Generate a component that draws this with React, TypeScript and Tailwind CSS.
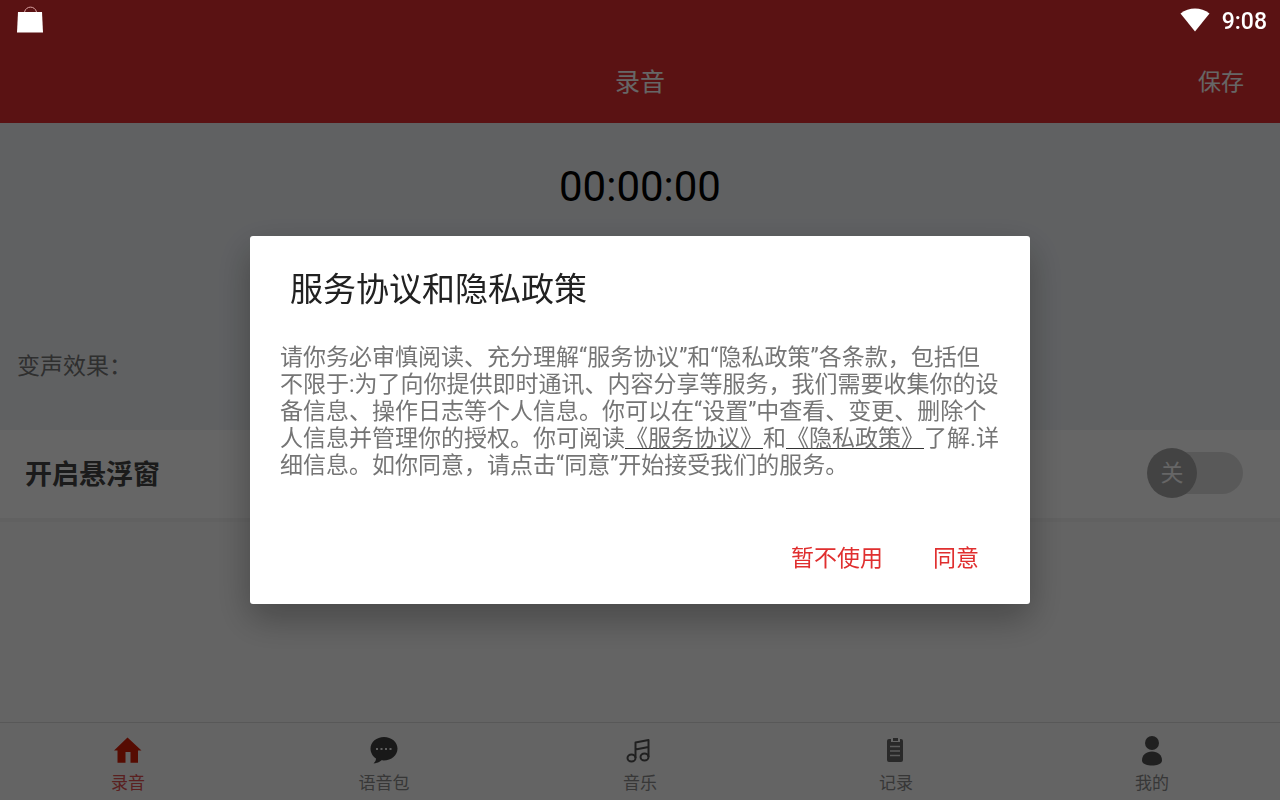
import type { ReactNode } from "react";

function BagIcon() {
  return (
    <svg width="28" height="28" viewBox="0 0 28 28" aria-hidden="true">
      <path d="M8.500 6C10 -.5 19 -.5 20.500 6" fill="none" stroke="#d9a3a3" strokeWidth="1" />
      <path d="M2 6h24L27 26.500H1z" fill="#fff" />
    </svg>
  );
}

function WifiIcon() {
  return (
    <svg width="30" height="24" viewBox="0 0 30 24" aria-hidden="true">
      <path d="M15 23.5L0.5 5.5C9 -1.200 21 -1.200 29.500 5.500z" fill="#fff" />
    </svg>
  );
}

function HomeIcon() {
  return (
    <svg width="28" height="28" viewBox="0 0 28 28" aria-hidden="true">
      <path d="M13.500 1.500L27.500 14.500H24V26.800H16.500V16h-5v10.800H3.500V14.500H0z" fill="#d81e06" />
    </svg>
  );
}

function ChatIcon() {
  return (
    <svg width="28" height="28" viewBox="0 0 28 28" aria-hidden="true">
      <path
        d="M14 1C6.500 1 0.500 6 0.500 12.500c0 4.500 2.500 8 5.500 10 0 2-1 3.500-2.500 5 3.500-.2 6-1.500 8-3.200 9 1 16-4.500 16-11.800C27.500 6 21.500 1 14 1z"
        fill="#404040"
      />
      <path d="M6 12h2v2H6zM10.500 12h2v2h-2zM15 12h2v2h-2zM19.500 12h2v2h-2z" fill="#eee" />
    </svg>
  );
}

function MusicIcon() {
  return (
    <svg width="28" height="28" viewBox="0 0 28 28" fill="none" stroke="#515151" strokeWidth="2" aria-hidden="true">
      <ellipse cx="5.500" cy="22" rx="4" ry="3.500" />
      <ellipse cx="18.500" cy="21" rx="4" ry="3.500" />
      <path d="M9.500 22V6.500L22.500 4v17M9.500 13.500L22.500 11" strokeLinejoin="round" />
    </svg>
  );
}

function ClipboardIcon() {
  return (
    <svg width="28" height="28" viewBox="0 0 28 28" aria-hidden="true">
      <path
        d="M7 3h2v3h9V3h1a2 2 0 0 1 2 2v19a2 2 0 0 1-2 2H7a2 2 0 0 1-2-2V5a2 2 0 0 1 2-2z"
        fill="#666"
      />
      <path d="M11 2h5v3h-5z" fill="#666" />
      <path d="M8 10.500h10M8 15h10M8 19.500h10" stroke="#e3e3e3" strokeWidth="1.500" />
    </svg>
  );
}

function UserIcon() {
  return (
    <svg width="28" height="30" viewBox="0 0 28 30" fill="#515151" aria-hidden="true">
      <circle cx="14" cy="7" r="7" />
      <path d="M4 24.500C4 19 8 15.500 14 15.500S24 19 24 24.500c0 3-4 5-10 5s-10-2-10-5z" />
    </svg>
  );
}

const tabs: { label: string; icon: ReactNode; active?: boolean }[] = [
  { label: "录音", icon: <HomeIcon />, active: true },
  { label: "语音包", icon: <ChatIcon /> },
  { label: "音乐", icon: <MusicIcon /> },
  { label: "记录", icon: <ClipboardIcon /> },
  { label: "我的", icon: <UserIcon /> },
];

function AgreementDialog() {
  return (
    <div className="fixed inset-0 z-10 flex items-center justify-center bg-black/60 pt-10">
      <section
        role="dialog"
        aria-modal="true"
        aria-labelledby="agreement-title"
        className="w-[780px] max-w-full rounded-[3px] bg-white px-[30px] pt-[30px] pb-[21px] shadow-[0_14px_36px_rgba(0,0,0,0.3)]"
      >
        <h2 id="agreement-title" className="px-[10px] text-[33px] leading-[48px] text-[#212121]">
          服务协议和隐私政策
        </h2>
        <p className="mt-[30px] text-[23px] leading-[27px] text-[#757575]">
          请你务必审慎阅读、充分理解“服务协议”和“隐私政策”各条款，包括但不限于:为了向你提供即时通讯、内容分享等服务，我们需要收集你的设备信息、操作日志等个人信息。你可以在“设置”中查看、变更、删除个人信息并管理你的授权。你可阅读
          <a href="#service" className="underline decoration-[#333] decoration-1 underline-offset-2">《服务协议》</a>
          和
          <a href="#privacy" className="underline decoration-[#333] decoration-1 underline-offset-2">《隐私政策》</a>
          了解.详细信息。如你同意，请点击“同意”开始接受我们的服务。
        </p>
        <div className="mt-14 flex justify-end gap-7 px-[10px] text-[23px] leading-[48px] text-[#e02f2f]">
          <button type="button" className="px-[11px]">暂不使用</button>
          <button type="button" className="px-[11px]">同意</button>
        </div>
      </section>
    </div>
  );
}

export default function App() {
  return (
    <div
      lang="zh-CN"
      className="flex min-h-screen flex-col bg-[#fafafa] font-[Roboto,'Noto_Sans_CJK_SC',sans-serif]"
    >
      <div className="fixed inset-x-0 top-0 z-20 flex h-10 items-center justify-between pr-[13px] pl-4 text-white">
        <BagIcon />
        <div className="flex items-center gap-3">
          <WifiIcon />
          <span className="pt-1 text-[23px] leading-10 font-medium">9:08</span>
        </div>
      </div>

      <header className="grid h-[123px] grid-cols-3 items-center bg-[#e22f31] px-9 pt-[42px] text-white">
        <h1 className="col-start-2 text-center text-[25px] leading-9">录音</h1>
        <button type="button" className="justify-self-end text-[23px] leading-9">保存</button>
      </header>

      <main className="flex-1">
        <section className="h-[307px] bg-[#f0f3f6] pt-9">
          <div className="text-center text-[42px] leading-[56px] text-black">00:00:00</div>
          <div className="mt-[134px] px-[17px] text-[23px] leading-9 text-[#757575]">变声效果：</div>
        </section>
        <label className="flex h-[92px] items-center justify-between border-b-4 border-[#f3f3f3] bg-white pr-[37px] pb-0.5 pl-[25px]">
          <span className="pt-1 text-[27px] leading-10 font-bold text-[#444]">开启悬浮窗</span>
          <span className="flex h-[42px] w-24 items-center rounded-full bg-linear-to-r from-transparent from-25% to-[#dfdfdf] to-25%">
            <input type="checkbox" className="sr-only" />
            <span className="flex size-[50px] shrink-0 items-center justify-center rounded-full bg-[#a8a8a8] pt-0.5 text-[23px] text-white">
              关
            </span>
          </span>
        </label>
      </main>

      <nav className="grid h-[78px] grid-cols-5 border-t border-[#ddd] bg-[#fafafa]">
        {tabs.map((tab) => (
          <a
            key={tab.label}
            href={`#${tab.label}`}
            className={
              tab.active
                ? "flex flex-col items-center pt-[13px] text-[17px] leading-6 text-[#e05050]"
                : "flex flex-col items-center pt-[13px] text-[17px] leading-6 text-[#8a8a8a]"
            }
          >
            <span className="flex h-[35px] items-start">{tab.icon}</span>
            <span>{tab.label}</span>
          </a>
        ))}
      </nav>

      <AgreementDialog />
    </div>
  );
}
